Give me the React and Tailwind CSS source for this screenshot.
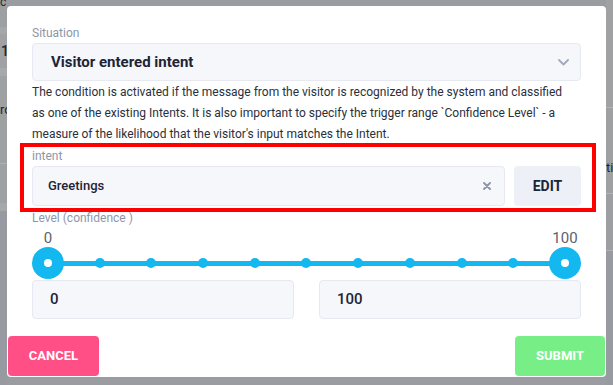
export default function App() {
  const steps = [0, 1, 2, 3, 4, 5, 6, 7, 8, 9, 10];
  return (
    <div className="relative w-[613px] h-[385px] overflow-hidden bg-[#9a9ca1] font-['Roboto',sans-serif]">
      {/* dimmed page behind the dialog */}
      <div className="flex h-full">
        <div className="w-[7px] flex flex-col text-[#1e2436] overflow-hidden">
          <div className="h-[31px] bg-[#9e9fa0] text-[12px] leading-[12px] -mt-[4px] whitespace-nowrap">c |</div>
          <div className="h-[7px] bg-[#a6a7a8]" />
          <div className="h-[34px] bg-[#a0a1a2] text-[14px] font-medium leading-[34px] pl-px">1</div>
          <div className="h-[8px] bg-[#a7a8a9]" />
          <div className="h-[87px] bg-[#9fa0a1] text-[13px] leading-[13px] pt-[27px] whitespace-nowrap">ro</div>
          <div className="h-px bg-[#aeb0b2]" />
          <div className="h-[39px] bg-[#9fa0a1]" />
          <div className="h-[8px] bg-[#a6a7a9]" />
          <div className="flex-1 bg-[#979aa1]" />
        </div>
        <div className="flex-1" />
        <div className="w-[7px] flex flex-col text-[#1e2436] overflow-hidden">
          <div className="h-[107px] bg-[#a0a1a2]" />
          <div className="h-px bg-[#b2b3b5]" />
          <div className="h-[85px] bg-[#9fa0a1] text-[13px] leading-[13px] pt-[53px] whitespace-nowrap">ti</div>
          <div className="h-px bg-[#b2b3b5]" />
          <div className="h-[56px] bg-[#9c9ea1]" />
          <div className="h-px bg-[#aeb0b4]" />
          <div className="flex-1 bg-[#979aa1]" />
        </div>
      </div>

      {/* dialog */}
      <div className="absolute left-[7px] top-[6px] w-[599px] h-[371px] bg-white rounded-[4px] flex flex-col">
        <div className="px-[25px] pt-[19px] flex flex-col">
          <div className="text-[12px] leading-4 text-[#8d96a7]">Situation</div>
          <div className="mt-[2px] h-[38px] rounded-[4px] border border-[#e6e9f1] bg-[#f5f7fb] flex items-center justify-between pl-[18px] pr-[11px]">
            <span className="text-[15px] font-bold text-[#1e2436]">Visitor entered intent</span>
            <svg width="11" height="7" viewBox="0 0 11 7" fill="none">
              <path d="M1 1l4.5 4.5L10 1" stroke="#a3aab8" strokeWidth="1.8" strokeLinecap="round" strokeLinejoin="round" />
            </svg>
          </div>
          <p className="mt-px text-[12px] leading-[21px] text-[#2a2f3b] whitespace-nowrap">
            The condition is activated if the message from the visitor is recognized by the system and classified
            <br />
            as one of the existing Intents. It is also important to specify the trigger range `Confidence Level` - a
            <br />
            measure of the likelihood that the visitor's input matches the Intent.
          </p>
          <div className="mt-[3px] text-[12px] leading-4 text-[#8d96a7]">intent</div>
          <div className="mt-[2px] flex gap-[9px] h-[40px]">
            <div className="flex-1 rounded-[4px] border border-[#e6e9f1] bg-[#f5f7fb] flex items-center justify-between pl-[15px] pr-[13px]">
              <span className="text-[13px] font-medium text-[#1e2436]">Greetings</span>
              <svg width="8" height="8" viewBox="0 0 8 8" fill="none">
                <path d="M1 1l6 6M7 1L1 7" stroke="#8b93a4" strokeWidth="1.8" strokeLinecap="round" />
              </svg>
            </div>
            <div className="w-[67px] rounded-[4px] bg-[#edf0f6] flex items-center justify-center text-[14px] font-bold text-[#1e2436]">
              EDIT
            </div>
          </div>
          <div className="mt-[4px] text-[12px] leading-4 text-[#8d96a7]">Level (confidence )</div>
          <div className="mt-[2px] flex justify-between text-[15px] leading-5 text-[#5d6270]">
            <span className="w-8 text-center">0</span>
            <span className="w-8 text-center">100</span>
          </div>
          <div className="-mt-px h-8 flex items-center px-4">
            <div className="flex-1 h-[5px] bg-[#12b8ef] flex items-center justify-between">
              {steps.map((s) =>
                s === 0 || s === 10 ? (
                  <div key={s} className="w-0 flex justify-center">
                    <div className="shrink-0 w-8 h-8 rounded-full bg-[#12b8ef] flex items-center justify-center">
                      <div className="w-2 h-2 rounded-full bg-white" />
                    </div>
                  </div>
                ) : (
                  <div key={s} className="w-0 flex justify-center">
                    <div className="shrink-0 w-[10px] h-[10px] rounded-full bg-[#12b8ef]" />
                  </div>
                )
              )}
            </div>
          </div>
          <div className="mt-px grid grid-cols-2 gap-[25px]">
            <div className="h-[39px] rounded-[4px] border border-[#e6e9f1] bg-[#f5f7fb] flex items-center pl-[17px] text-[15px] font-medium text-[#1e2436]">0</div>
            <div className="h-[39px] rounded-[4px] border border-[#e6e9f1] bg-[#f5f7fb] flex items-center pl-[17px] text-[15px] font-medium text-[#1e2436]">100</div>
          </div>
        </div>
        <div className="mt-auto flex justify-between px-px pb-px">
          <div className="w-[91px] h-[40px] rounded-[4px] bg-[#ff4f86] flex items-center justify-center text-[13px] font-bold text-white">CANCEL</div>
          <div className="w-[90px] h-[40px] rounded-[4px] bg-[#78ef86] flex items-center justify-center text-[13px] font-bold text-white">SUBMIT</div>
        </div>
      </div>

      {/* red highlight annotation */}
      <div className="absolute left-[20px] top-[143px] w-[576px] h-[69px] border-4 border-[#ff0000]" />
    </div>
  );
}
